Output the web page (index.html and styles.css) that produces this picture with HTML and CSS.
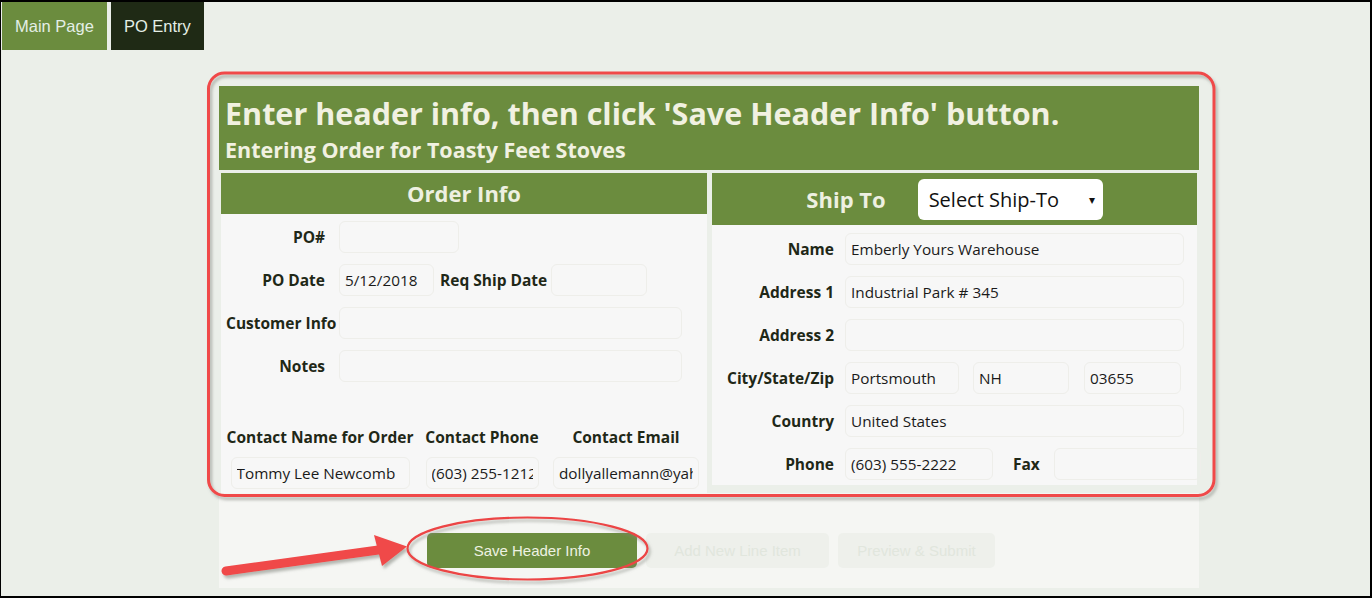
FILE: index.html
```html
<!DOCTYPE html>
<html lang="en">
<head>
    <meta charset="UTF-8">
    <meta name="viewport" content="width=device-width, initial-scale=1.0">
    <title>PO Entry</title>
    <link rel="stylesheet" href="styles.css">
</head>
<body>
    <div class="screen">
        <!-- top tabs -->
        <div class="tabs">
            <a class="tab" href="javascript:;">Main Page</a>
            <a class="tab active" href="javascript:;">PO Entry</a>
        </div>

        <div class="entry">
            <div class="banner">
                <h1>Enter header info, then click 'Save Header Info' button.</h1>
                <h2>Entering Order for Toasty Feet Stoves</h2>
            </div>

            <div class="cols">
                <!-- left: order info -->
                <div class="panel order">
                    <div class="panel-head">Order Info</div>
                    <div class="panel-body">
                        <div class="row">
                            <label>PO#</label>
                            <input class="w-po" type="text">
                        </div>
                        <div class="row">
                            <label>PO Date</label>
                            <input class="w-date" type="text" value="5/12/2018">
                            <label class="inline">Req Ship Date</label>
                            <input class="w-date2" type="text">
                        </div>
                        <div class="row">
                            <label>Customer Info</label>
                            <input class="w-wide" type="text">
                        </div>
                        <div class="row">
                            <label>Notes</label>
                            <input class="w-wide" type="text">
                        </div>
                        <div class="contact">
                            <label>Contact Name for Order</label>
                            <label>Contact Phone</label>
                            <label>Contact Email</label>
                            <input class="w-cname" type="text" value="Tommy Lee Newcomb">
                            <input class="w-cphone" type="text" value="(603) 255-1212">
                            <input class="w-cmail" type="text" value="dollyallemann@yahoo.com">
                        </div>
                    </div>
                </div>

                <!-- right: ship to -->
                <div class="panel ship">
                    <div class="panel-head">
                        <span>Ship To</span>
                        <div class="picker">
                            <span>Select Ship-To</span>
                            <span class="caret">&#9662;</span>
                        </div>
                    </div>
                    <div class="panel-body">
                        <div class="row">
                            <label>Name</label>
                            <input class="w-full" type="text" value="Emberly Yours Warehouse">
                        </div>
                        <div class="row">
                            <label>Address 1</label>
                            <input class="w-full" type="text" value="Industrial Park # 345">
                        </div>
                        <div class="row">
                            <label>Address 2</label>
                            <input class="w-full" type="text">
                        </div>
                        <div class="row">
                            <label>City/State/Zip</label>
                            <input class="w-city" type="text" value="Portsmouth">
                            <input class="w-state" type="text" value="NH">
                            <input class="w-zip" type="text" value="03655">
                        </div>
                        <div class="row">
                            <label>Country</label>
                            <input class="w-full" type="text" value="United States">
                        </div>
                        <div class="row">
                            <label>Phone</label>
                            <input class="w-phone" type="text" value="(603) 555-2222">
                            <label class="inline fax">Fax</label>
                            <input class="w-fax" type="text">
                        </div>
                    </div>
                </div>
            </div>

            <div class="actions">
                <button class="btn save">Save Header Info</button>
                <button class="btn off w-add">Add New Line Item</button>
                <button class="btn off w-prev">Preview &amp; Submit</button>
            </div>
        </div>
    </div>

    <!-- red callouts drawn over the screenshot -->
    <svg class="marks" width="1372" height="598" viewBox="0 0 1372 598">
        <defs>
            <filter id="sh" x="-5%" y="-5%" width="110%" height="120%">
                <feDropShadow dx="2" dy="3" stdDeviation="1.5" flood-color="#7d8279" flood-opacity="0.55"/>
            </filter>
        </defs>
        <g filter="url(#sh)">
            <rect x="208.5" y="73" width="1005.5" height="422.5" rx="16" fill="none" stroke="#f04848" stroke-width="3"/>
            <ellipse cx="527.5" cy="548.5" rx="120" ry="31" fill="none" stroke="#ec4444" stroke-width="2.2"/>
            <line x1="226" y1="571" x2="382" y2="549.5" stroke="#f04848" stroke-width="9" stroke-linecap="round"/>
            <polygon points="374,535 407,546.5 382,566" fill="#f04848"/>
        </g>
    </svg>
</body>
</html>
```

FILE: styles.css
```css
body {
    margin: 0;
    padding: 0;
    position: relative;
}
.screen {
    width: 1372px;
    height: 598px;
    box-sizing: border-box;
    border-style: solid;
    border-color: #000;
    border-width: 2px 2px 2px 1px;
    background-color: #ebefe9;
    font-family: "Open Sans", "Noto Sans", sans-serif;
    overflow: hidden;
}
.marks {
    position: absolute;
    left: 0;
    top: 0;
    pointer-events: none;
}

/* tabs */
.tabs {
    display: flex;
    gap: 4px;
    margin-left: 1px;
}
.tab {
    display: block;
    height: 48px;
    line-height: 48px;
    padding: 0 13px;
    font-family: "Liberation Sans", Arial, sans-serif;
    font-size: 16.5px;
    color: #e4efe6;
    text-decoration: none;
    background-color: #6b8c3e;
}
.tab.active {
    background-color: #1f2a15;
}

/* main block */
.entry {
    margin: 36px 0 0 218px;
    width: 980px;
}
.banner {
    height: 84px;
    box-sizing: border-box;
    padding: 7px 6px 0;
    background-color: #6b8c3e;
    color: #f1f1e1;
}
.banner h1 {
    margin: 0;
    font-size: 30.5px;
    line-height: 41px;
    font-weight: 700;
}
.banner h2 {
    margin: 2px 0 0;
    font-size: 21.5px;
    line-height: 28px;
    font-weight: 700;
}
.cols {
    display: flex;
    align-items: flex-start;
    gap: 5px;
    margin-top: 3px;
    padding: 0 2px;
}
.panel {
    flex: none;
}
.order {
    width: 486px;
}
.ship {
    width: 485px;
}
.panel-head {
    background-color: #6b8c3e;
    color: #eef0e1;
    font-size: 22px;
    font-weight: 700;
    text-align: center;
    height: 41px;
    line-height: 41px;
}
.ship .panel-head {
    height: 52px;
    display: flex;
    justify-content: center;
    align-items: center;
    gap: 32px;
    line-height: normal;
}
.picker {
    width: 185px;
    height: 41px;
    box-sizing: border-box;
    display: flex;
    justify-content: space-between;
    align-items: center;
    padding: 0 8px 0 11px;
    background-color: #fff;
    border-radius: 6px;
    color: #111;
    font-size: 20px;
    font-weight: 400;
}
.picker .caret {
    font-size: 12px;
}
.panel-body {
    background-color: #f7f7f7;
    box-sizing: border-box;
}
.order .panel-body {
    height: 279px;
    padding: 1px 0 0 5px;
}
.ship .panel-body {
    height: 260px;
    padding: 2px 0 0 10px;
}

/* form rows */
.row {
    display: flex;
    align-items: center;
    height: 43px;
}
.row label {
    flex: none;
    width: 99px;
    margin-right: 14px;
    text-align: right;
    white-space: nowrap;
    font-size: 15.5px;
    font-weight: 700;
    color: #1f2817;
}
.ship .row label {
    width: 112px;
    margin-right: 11px;
}
.row label.inline,
.ship .row label.inline {
    width: auto;
    margin: 0 4px 0 6px;
}
.ship .row label.fax {
    margin: 0 14px 0 20px;
}
input {
    flex: none;
    height: 32px;
    box-sizing: border-box;
    padding: 0 5px;
    border: 1px solid #eeeeea;
    border-radius: 6px;
    background-color: transparent;
    font-family: inherit;
    font-size: 15.3px;
    color: #1a1a1a;
    outline: none;
}
.w-po { width: 120px; }
.w-date { width: 95px; }
.w-date2 { width: 96px; }
.w-wide { width: 343px; }
.w-full { width: 339px; }
.w-city { width: 114px; margin-right: 14px; }
.w-state { width: 96px; margin-right: 15px; }
.w-zip { width: 97px; }
.w-phone { width: 148px; }
.w-fax { width: 147px; }

/* contact block */
.contact {
    display: grid;
    grid-template-columns: 192px 132px 156px;
    justify-items: center;
    row-gap: 9px;
    margin: 39px 0 0 -2px;
}
.contact label {
    white-space: nowrap;
    font-size: 15.5px;
    font-weight: 700;
    line-height: 22px;
    color: #1f2817;
}
.w-cname { width: 179px; }
.w-cphone { width: 113px; }
.w-cmail { width: 146px; }

/* buttons under the form */
.actions {
    height: 95px;
    box-sizing: border-box;
    padding-top: 40px;
    display: flex;
    justify-content: center;
    align-items: flex-start;
    gap: 9px;
    background-color: #f5f6f3;
}
.btn {
    height: 35px;
    border: none;
    border-radius: 5px;
    font-family: "Liberation Sans", Arial, sans-serif;
    font-size: 15px;
}
.save {
    width: 210px;
    margin-left: 4px;
    background-color: #6b8c3e;
    color: #eef2e2;
}
.off {
    background-color: #eef0eb;
    color: #e1e6dd;
}
.w-add { width: 183px; }
.w-prev { width: 157px; }
```
